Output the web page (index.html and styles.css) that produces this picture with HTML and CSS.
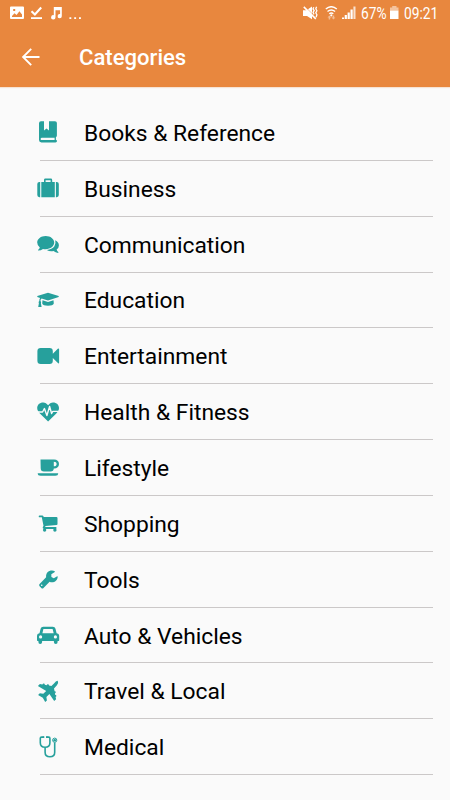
FILE: index.html
```html
<!DOCTYPE html>
<html lang="en">
<head>
<meta charset="utf-8">
<meta name="viewport" content="width=device-width">
<title>Categories</title>
<link rel="stylesheet" href="styles.css">
</head>
<body>
<header class="header">
  <div class="status">
    <div class="notifications">
      <svg width="74" height="16" viewBox="0 0 74 16">
        <path fill-rule="evenodd" d="M1 .5h12q1 0 1 1v10.500q0 1-1 1H1q-1 0-1-1V1.500q0-1 1-1zM2 11h10V8.500L9.400 5.200 6.600 9 4.500 7.200 2 10zM3.200 3v2h2V3z"/>
        <path d="M21.500 5.200l3.400 3.300 6.300-7" fill="none" stroke="#fff" stroke-width="2.1"/>
        <path d="M21 11.200h11v1.800H21z"/>
        <path d="M43.800 1h8v9.200a2.100 2.100 0 1 1-1.700-2.100V4.300h-4.600v7a2.200 2.200 0 1 1-1.700-2.100z"/>
        <path d="M59.400 11.200h1.900v1.900h-1.900zM64.200 11.200h1.900v1.900h-1.900zM69 11.200h1.900v1.900H69z"/>
      </svg>
    </div>
    <div class="system">
      <svg width="54" height="16" viewBox="0 0 54 16">
        <path d="M0 4.200h3.500L9 .5v12.700L4 9.900H0z"/>
        <path d="M1.500.2l12 12" stroke="#e8873e" stroke-width=".8"/>
        <path d="M.8.900l12 12" stroke="#fff" stroke-width="1.500"/>
        <path d="M10.800 1.200l-.8 1.700 1.200 1.700-1.200 1.800 1 2M13.600.8l-.8 2 1.100 2-1.100 2 1.100 2-.8 2.500" fill="none" stroke="#fff" stroke-width="1.300"/>
        <path d="M22.800 3q5.500-4.600 11 0M24.500 5.500q3.800-3.200 7.600 0M26.300 7.800q2-1.700 4 0" fill="none" stroke="#fff" stroke-width="1.400"/>
        <circle cx="28.300" cy="9.300" r="1.100"/>
        <path d="M26.400 9.500l2 2h-1.200v2h-1.500v-2h-1.200zM30.500 13.500l-2-2h1.200v-2h1.500v2h1.200z" opacity=".45"/>
        <path d="M39 11.500h2V13h-2zM41.700 9h2.200v4h-2.200zM44.600 6.500h2.200V13h-2.200zM47.500 3.500h2.200V13h-2.200z"/>
        <path d="M50.400.5h2.100V13h-2.100z" opacity=".75"/>
      </svg>
      <span class="battery-level">67%</span>
      <svg class="battery" width="9" height="14" viewBox="0 0 9 14">
        <path d="M2.200 0h4.300v1.400h2V5H0V1.400h2.200z" opacity=".5"/>
        <path d="M0 4.700h8.500V13H0z"/>
      </svg>
      <span class="clock">09:21</span>
    </div>
  </div>
  <div class="toolbar">
    <svg class="back" width="20" height="20" viewBox="0 0 20 20" fill="none" stroke="#fff" stroke-width="1.900"><path d="M18.500 10H2.300M10.200 1.900L2.100 10l8.100 8.100"/></svg>
    <h1>Categories</h1>
  </div>
</header>
<main>
  <ul class="list">
    <li>
      <svg viewBox="0 0 24 24"><path d="M5 1.200h3v9.300l2.500-2 2.500 2V1.200h6q1.900 0 1.900 1.900v12.500q0 1.200-1 1.600v2.600q1.100.3 1.100 1.300 0 1.300-1.500 1.300H5.500Q3 22.400 3 20V3.200q0-2 2-2zM6 17.700q-1.400 0-1.400 1.200T6 20.100h12.600v-2.400z" fill-rule="evenodd"/></svg>
      <span>Books &amp; Reference</span></li>
    <li>
      <svg viewBox="0 0 24 24"><path fill-rule="evenodd" d="M5.300 6H8V4q0-1.400 1.400-1.400h5.400Q16.200 2.600 16.200 4v2h2.600v15.200H5.300zM9.600 4.200V6h5V4.200zM4.200 6v15.200H3.400q-2.100 0-2.100-2.100V8.100Q1.300 6 3.400 6zM19.900 6h.8q2.100 0 2.100 2.100v11q0 2.100-2.100 2.100h-.8z"/></svg>
      <span>Business</span></li>
    <li>
      <svg viewBox="0 0 24 24"><path d="M9.700 4c4.800 0 8.500 2.900 8.500 6.600s-3.700 6.600-8.500 6.600q-1.500 0-2.700-.3-2 1.500-4.800 1.600-.4-.4 0-.8 1.300-.7 1.600-2.200-2.600-2-2.600-4.900C1.200 6.900 4.900 4 9.700 4z"/><path d="M19.200 8.200q3.700 1.700 3.700 5.200 0 2.500-2.300 4.200.5 1.700 1.700 2.500.4.500-.2.800-2.700-.1-4.600-1.800-4 .8-6.700-1.200 5.200-.4 7.600-3.600 1.800-2.700.8-6.100z"/></svg>
      <span>Communication</span></li>
    <li>
      <svg viewBox="0 0 24 24"><path d="M12 4.700l10.700 3.400v.9L12 12.500l-6.400-2q-1.200.6-1.200 2.500 1.300.9.500 2.200l.7 3.800H2.200l.7-3.800q-.9-1.300.4-2.200 0-1.800.8-3L1.300 9v-.9z"/><path d="M6.500 12.200l5.500 1.700 5.500-1.700.3 3.300q-.8 2.200-5.800 2.300-5-.1-5.800-2.300z"/></svg>
      <span>Education</span></li>
    <li>
      <svg viewBox="0 0 24 24"><path d="M4.700 4h8.900q3.200 0 3.200 3.200v2.500l5-5q.3-.3.700-.3.600 0 .6.700v13.700q0 .6-.5.600-.4 0-.7-.3l-5.100-5v2.700q0 3.300-3.200 3.300H4.700q-3.300 0-3.300-3.300V7.200Q1.400 4 4.700 4z"/></svg>
      <span>Entertainment</span></li>
    <li>
      <svg viewBox="0 0 24 24"><path d="M12.100 5.200C13.400 3.500 15 2.400 17 2.400c3.700 0 6 2.300 6 5.700 0 2-1 3.600-2.700 5.500l-8.200 7.800-8.200-7.800C2.200 11.700 1.200 10.100 1.200 8.100c0-3.400 2.300-5.700 6-5.700 2 0 3.600 1.100 4.900 2.800z"/><path d="M1.300 12h5.300l1.800-3.500 2.500 7 2.700-9 2 7 1.200-2.100h6.300" fill="none" stroke="#fafafa" stroke-width="1.400" stroke-linejoin="round"/></svg>
      <span>Health &amp; Fitness</span></li>
    <li>
      <svg viewBox="0 0 24 24"><path fill-rule="evenodd" d="M4.500 4.500h13.600c2.900 0 4.900 1.700 4.900 4.500 0 3-2.300 4.800-5.200 4.600-.1 2.100-1.200 3-3.200 3H8q-3.300 0-3.300-3.300zM17.800 6.800v4.500c1.700.1 2.800-.8 2.800-2.300 0-1.400-1-2.200-2.800-2.200z"/><path d="M1.700 18.200h20.500q0 2.500-2.900 2.500H4.600q-2.900 0-2.900-2.500z"/></svg>
      <span>Lifestyle</span></li>
    <li>
      <svg viewBox="0 0 24 24"><path d="M3.600 4.500h2.900q1 0 1.200 1.500h12.700q1.100 0 1.100 1v5.900q0 .9-.9 1L9.500 15.100l-.3 1h10.500q.9 0 .9.900t-.9.900H8q-1.300 0-1.300-1.100 0-.5.800-2L5.800 6.300H3.600q-.9 0-.9-.9t.9-.9z"/><circle cx="8.600" cy="19.100" r="1.700"/><circle cx="18.900" cy="19.100" r="1.700"/></svg>
      <span>Shopping</span></li>
    <li>
      <svg viewBox="0 0 24 24"><path fill-rule="evenodd" d="M10.100 10.300C9.700 6.300 12.300 3.600 16 3.600q1.700 0 2.900.8.400.4-.1.700l-3.500 2.100.1 2.700 2.400 1.300 3.400-2q.5-.1.500.5c-.1 3.400-2.700 5.600-5.800 5.600q-1.300 0-2.300-.5l-6.100 6.100q-1.100 1-2.200 0l-1.700-1.700q-1.100-1.100 0-2.200zM5.700 17.400a.8.8 0 1 0 .1 1.600.8.8 0 0 0-.1-1.600z"/></svg>
      <span>Tools</span></li>
    <li>
      <svg viewBox="0 0 24 24"><path fill-rule="evenodd" d="M7.200 3.800h9.600q2.200 0 2.700 2l1.100 4.500h.2q2.400 0 2.400 2.500v4.500q0 .6-.6.600h-1v1.200q0 1.900-1.800 1.900-1.900 0-1.900-1.900v-1.200H6.100v1.200Q6.100 21 4.200 21q-1.800 0-1.800-1.900v-1.200h-.8q-.6 0-.6-.6v-4.500q0-2.500 2.400-2.500h.1L4.600 5.800q.5-2 2.600-2zM7.400 6.100l-1 4.200h11.300l-1.100-4.200zM4.600 12.300a1.600 1.600 0 1 0 0 3.200 1.600 1.600 0 0 0 0-3.200zM19.400 12.300a1.600 1.600 0 1 0 0 3.200 1.600 1.600 0 0 0 0-3.200z"/></svg>
      <span>Auto &amp; Vehicles</span></li>
    <li>
      <svg viewBox="0 0 24 24"><path d="M21.800 1.900q1.100 1.600-.9 4.400l-2.900 3.100.6 2.900.8-.1.400 1.300-.9.900.4 1.600.8-.1.300 1.300-.8.800.5 2.300-1.900 1.800-4.800-7.100-3 2.900.5 3.500-1.700 1.500-2.400-4.100-4.700-2.800 1.700-1.700 3.500.5 2.900-2.900L1.900 6.900l2-2 2.500.5.700-.9 1.500.3.200 1 1.800.4.700-.9 1.500.3.200 1 2.400.5 2.600-2.700Q20.200 1.500 21.800 1.900z"/></svg>
      <span>Travel &amp; Local</span></li>
    <li>
      <svg viewBox="0 0 24 24" fill="none" stroke="#26a09c" stroke-width="1.600"><path d="M7.700 2.100H5.500Q4.300 2.100 4.300 3.300v4.400q0 4.600 4.800 4.600t4.800-4.600V3.300q0-1.200-1.200-1.200h-2.200M9.100 12.500v4.700q0 4.600 4.800 4.600t4.800-4.600V7.500"/><circle cx="18.700" cy="5.200" r="2.100" stroke-width="1"/><circle cx="18.700" cy="5.200" r="1.300" fill="#26a09c" stroke="none"/><path d="M7.500 1.200v1.900M10.800 1.200v1.900"/></svg>
      <span>Medical</span></li>
  </ul>
</main>
</body>
</html>
```
FILE: styles.css
```css
* {
  box-sizing: border-box;
}

body {
  margin: 0;
  height: 800px;
  overflow: hidden;
  background: #fafafa;
  color: #000;
  font-family: Roboto, "Liberation Sans", sans-serif;
}

svg {
  display: block;
  flex: none;
}

.header {
  height: 87px;
  background: #e8873e;
  color: #fff;
  fill: #fff;
  box-shadow: 0 1px 1px rgba(232, 135, 62, 0.2);
}

.status {
  display: flex;
  justify-content: space-between;
  height: 28px;
  padding: 6px 11px 0 10px;
}

.system {
  display: flex;
  align-items: flex-start;
  font-size: 16px;
  line-height: 16px;
}

.battery-level,
.clock {
  display: block;
  white-space: nowrap;
  transform-origin: left;
  transform: scaleX(0.86);
}

.battery-level {
  width: 27px;
  margin-left: 4px;
}

.battery {
  margin: 0 5px 0 2px;
}

.clock {
  width: 35px;
}

.toolbar {
  display: flex;
  align-items: center;
  height: 59px;
  padding-left: 21px;
}

.back {
  margin-bottom: 2px;
}

h1 {
  margin: 0 0 1px 38px;
  font-size: 22.1px;
  font-weight: 500;
  line-height: 28px;
}

.list {
  margin: 0;
  padding: 18px 17px 0 40px;
  list-style: none;
}

.list li {
  display: flex;
  align-items: center;
  height: 55.85px;
  border-bottom: 1px solid #cbc8c8;
  font-size: 22.8px;
}

.list span {
  padding-top: 2px;
}

.list svg {
  width: 24px;
  height: 24px;
  margin: 0 24px 0 -4px;
  fill: #26a09c;
}

.list svg[fill="none"] {
  fill: none;
}
```
